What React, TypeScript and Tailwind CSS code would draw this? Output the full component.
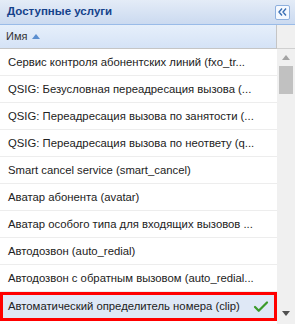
import { Check } from "lucide-react";

const rows = [
  "Сервис контроля абонентских линий (fxo_tr...",
  "QSIG: Безусловная переадресация вызова (...",
  "QSIG: Переадресация вызова по занятости (...",
  "QSIG: Переадресация вызова по неответу (q...",
  "Smart cancel service (smart_cancel)",
  "Аватар абонента (avatar)",
  "Аватар особого типа для входящих вызовов ...",
  "Автодозвон (auto_redial)",
  "Автодозвон с обратным вызовом (auto_redial...",
];

export default function App() {
  return (
    <div
      className="flex h-[324px] w-[295px] flex-col overflow-hidden bg-white text-[11.3px] text-[#222]"
      style={{ fontFamily: "'Liberation Sans', Arial, sans-serif" }}
    >
      {/* Panel header */}
      <div className="flex h-[25px] shrink-0 items-center justify-between border-b border-[#99bbe8] bg-gradient-to-b from-[#e4ecf7] to-[#cbdaf0] pl-[7px] pr-[5px]">
        <span className="text-[11.5px] font-bold text-[#15428b]">Доступные услуги</span>
        <button className="flex h-[15px] w-[15px] items-center justify-center rounded-[2px] border border-[#8eb0de] bg-[#f5f9ff]">
          <svg width="9" height="8" viewBox="0 0 9 8">
            <path d="M4 0.5 L1 4 L4 7.5 M8 0.5 L5 4 L8 7.5" fill="none" stroke="#3a6fb5" strokeWidth="1.4" />
          </svg>
        </button>
      </div>

      {/* Column header */}
      <div className="flex h-[24px] shrink-0">
        <div className="flex flex-1 items-center gap-[5px] border-b border-r border-[#c5c5c5] bg-gradient-to-b from-[#e6effb] to-[#d5e3f6] pl-[6px] text-[11px] text-[#333]">
          <span>Имя</span>
          <svg width="8" height="5" viewBox="0 0 8 5">
            <path d="M0 5 L4 0 L8 5 Z" fill="#5b8fd0" />
          </svg>
        </div>
        <div className="w-[18px] border-b border-[#d0d0d0] bg-[#f0f0f0]" />
      </div>

      <div className="flex min-h-0 flex-1">
        {/* Rows */}
        <div className="flex min-w-0 flex-1 flex-col">
          {rows.map((r) => (
            <div
              key={r}
              className="flex h-[27px] shrink-0 items-center overflow-hidden whitespace-nowrap border-b border-[#ededed] pl-[8px]"
            >
              {r}
            </div>
          ))}
          <div className="flex h-[29px] shrink-0 items-center justify-between border-[3px] border-[#f00] bg-[#dfe8f6] pl-[5px] pr-[4px]">
            <span className="whitespace-nowrap">Автоматический определитель номера (clip)</span>
            <Check className="h-[18px] w-[18px] text-[#3a9a2a]" strokeWidth={3} />
          </div>
        </div>

        {/* Scrollbar */}
        <div className="flex w-[18px] shrink-0 flex-col items-center bg-[#f0f0f0]">
          <svg className="mt-[6px]" width="8" height="5" viewBox="0 0 8 5">
            <path d="M0 5 L4 0 L8 5 Z" fill="#a3a3a3" />
          </svg>
          <div className="mt-[6px] h-[28px] w-[14px] bg-[#c1c1c1]" />
          <div className="flex-1" />
          <svg className="mb-[8px]" width="8" height="5" viewBox="0 0 8 5">
            <path d="M0 0 L4 5 L8 0 Z" fill="#505050" />
          </svg>
        </div>
      </div>
    </div>
  );
}
